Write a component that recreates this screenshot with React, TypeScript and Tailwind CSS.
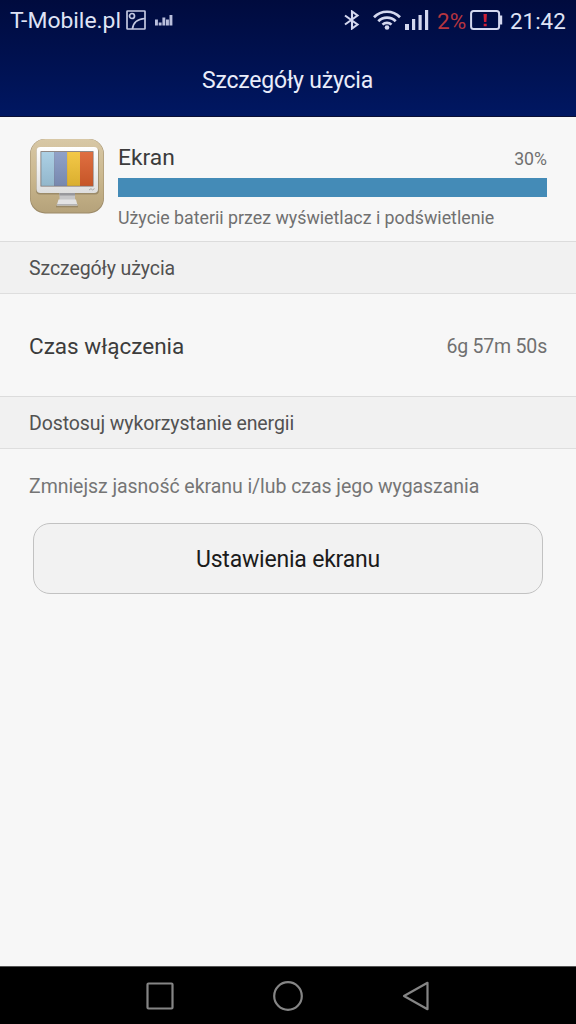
import type { ReactNode } from 'react';

const BARWY = ['#a3cbe2', '#8497c2', '#f2c234', '#dc5f2c'];

function SectionHeader({ children }: { children: ReactNode }) {
  return (
    <div className="h-[52px] shrink-0 border-t border-[#dcdcdc] bg-[#f1f1f1] pl-[29px] pt-[3px] flex items-center">
      <h2 className="text-[19.5px] leading-6 tracking-[-0.1px] text-[#525252]">{children}</h2>
    </div>
  );
}

function StatusBar() {
  return (
    <div className="flex h-10 items-center pl-[10px] pr-[9px] text-[22px] leading-10 text-[#dfe3f5]">
      <span className="w-[112px] pt-[2px] text-[22.9px] whitespace-nowrap">T-Mobile.pl</span>
      <svg className="ml-1 shrink-0" width="20" height="20" viewBox="0 0 20 20" fill="none" stroke="#c3c8e0" strokeWidth="1.7">
        <rect x="1" y="1" width="18" height="18" rx="0.5" />
        <circle cx="6" cy="6" r="2.5" />
        <path d="M6.500 19c.5-6 5-10 12.500-10.500" />
      </svg>
      <svg className="ml-[9px] shrink-0" width="18" height="12" viewBox="0 0 18 12" fill="#b9bfdc">
        <path d="M0 5.500h2.900v6H0zM3.700 8.500h2.900v3H3.700zM7.400 3.500h2.900v8H7.400zM11 5.500h2.900v6H11zM14.500 1h2.900v10.500h-2.900z" />
      </svg>
      <div className="ml-auto flex shrink-0 items-center">
        <svg width="16" height="20" viewBox="0 0 16 20" fill="none" stroke="#d4d8ef" strokeWidth="2.100">
          <path d="M1 5.500l12.500 9L8 18.500v-17l5.500 4-12.500 9" />
        </svg>
        <svg className="ml-[13px]" width="28" height="20" viewBox="0 0 28 20" fill="none" stroke="#d4d8ef" strokeWidth="2.700">
          <path d="M1 7.300a18 18 0 0 1 26 0M5.300 11.200a12.200 12.200 0 0 1 17.400 0M9.500 14.600a6.500 6.500 0 0 1 9 0" />
          <circle cx="14" cy="17.500" r="2.300" fill="#d4d8ef" stroke="none" />
        </svg>
        <svg className="ml-1" width="24" height="20" viewBox="0 0 24 20" fill="#d4d8ef">
          <path d="M0 14h4v6H0zM7 9h3.200v11H7zM13.500 5h3.200v15h-3.200zM20 0h3.200v20H20z" />
        </svg>
        <span className="ml-[8px] w-[30px] pt-[2px] text-[22.5px] whitespace-nowrap text-[#b5353f]">2%</span>
        <svg className="ml-[3px]" width="33" height="20" viewBox="0 0 33 20" fill="none">
          <rect x="1.100" y="1.100" width="28" height="17.800" rx="2.500" stroke="#d4d8ef" strokeWidth="2" />
          <path d="M30 5.500h2.200v9H30z" fill="#d4d8ef" />
          <path d="M13.500 4h3.400l-.5 8h-2.400zM13.700 13.700h3v2.500h-3z" fill="#cf1f35" />
        </svg>
        <span className="ml-[7px] w-[57px] pt-[2px] text-[22.4px] whitespace-nowrap">21:42</span>
      </div>
    </div>
  );
}

function ScreenIcon() {
  return (
    <svg className="shrink-0" width="76" height="76" viewBox="0 0 76 76">
      <defs>
        <linearGradient id="sand" x1="0" y1="0" x2="0" y2="1">
          <stop offset="0" stopColor="#d8c8a6" />
          <stop offset="0.5" stopColor="#cbb88f" />
          <stop offset="1" stopColor="#b5a27a" />
        </linearGradient>
        <linearGradient id="shell" x1="0" y1="0" x2="0" y2="1">
          <stop offset="0" stopColor="#ffffff" />
          <stop offset="1" stopColor="#dedede" />
        </linearGradient>
        <linearGradient id="shade" x1="0" y1="0" x2="0" y2="1">
          <stop offset="0" stopColor="#fff" stopOpacity="0.1" />
          <stop offset="1" stopColor="#000" stopOpacity="0.1" />
        </linearGradient>
      </defs>
      <rect x="1" y="1" width="74" height="74.500" rx="15" fill="#9c8a68" />
      <rect x="1.500" y="1" width="73" height="73.500" rx="15" fill="url(#sand)" />
      <rect x="7" y="10" width="63" height="46.500" rx="4" fill="#77694e" opacity="0.5" />
      <rect x="7.500" y="9" width="61.500" height="46" rx="4" fill="url(#shell)" />
      <rect x="11.500" y="13.200" width="53" height="35.300" fill="#766b68" />
      {BARWY.map((kolor, i) => (
        <rect key={kolor} x={12.3 + i * 12.9} y="14" width="12.900" height="33.800" fill={kolor} />
      ))}
      <rect x="12.300" y="14" width="51.600" height="33.800" fill="url(#shade)" />
      <path d="M60 52l2-1.300 1.500 1.200 2-1.200" fill="none" stroke="#aaa" strokeWidth="1" />
      <path d="M27 67.500h22v1.800H27z" fill="#77694e" opacity="0.5" />
      <path d="M30.500 55h15.500v7H30.500z" fill="#c6c6c8" />
      <path d="M30.500 55h15.500v2.500H30.500z" fill="#98989c" />
      <path d="M29.500 61.500h17.500l1.500 6H27.700z" fill="#e3e3e4" />
      <path d="M27.700 66h20.800v1.500H27.700z" fill="#b4b4b6" />
    </svg>
  );
}

function NavBar() {
  return (
    <nav className="flex h-[58px] shrink-0 items-center justify-center gap-[98px] border-t border-[#555] bg-black">
      <svg width="30" height="30" viewBox="0 0 30 30" fill="none" stroke="#858585" strokeWidth="2.200">
        <rect x="2.500" y="2.500" width="25" height="25" rx="1" />
      </svg>
      <svg width="30" height="30" viewBox="0 0 30 30" fill="none" stroke="#858585" strokeWidth="2.200">
        <circle cx="15" cy="15" r="13.800" />
      </svg>
      <svg width="30" height="30" viewBox="0 0 30 30" fill="none" stroke="#858585" strokeWidth="2.200" strokeLinejoin="round">
        <path d="M26.500 1.800v26.400L3 15z" />
      </svg>
    </nav>
  );
}

export default function App() {
  return (
    <div className="flex h-screen w-full flex-col bg-[#f7f7f7] font-[Roboto,sans-serif]">
      <header className="h-[117px] shrink-0 border-b border-[#0a0f35] bg-linear-to-b from-[#000b3e] to-[#001762]">
        <StatusBar />
        <h1 className="pt-[25px] pr-px text-center text-[23px] leading-8 tracking-[-0.2px] text-[#e9ecfa]">Szczegóły użycia</h1>
      </header>

      <main className="flex flex-1 flex-col">
        <div className="flex h-[124px] shrink-0 gap-[13px] pl-[29px] pr-[29px] pt-[21px]">
          <ScreenIcon />
          <div className="flex-1">
            <div className="flex h-10 items-center justify-between">
              <span className="text-[22.800px] text-[#3c3c3c]">Ekran</span>
              <span className="pt-[3px] text-[17.700px] text-[#707070]">30%</span>
            </div>
            <div className="h-[19px] bg-[#448bb7]" />
            <p className="pt-[9px] text-[17.800px] leading-6 whitespace-nowrap text-[#707070]">
              Użycie baterii przez wyświetlacz i podświetlenie
            </p>
          </div>
        </div>

        <SectionHeader>Szczegóły użycia</SectionHeader>
        <div className="flex h-[103px] shrink-0 items-center justify-between border-t border-[#dedede] px-[29px] pt-[2px]">
          <span className="pt-px text-[22.500px] text-[#3c3c3c]">Czas włączenia</span>
          <span className="pt-[2px] text-[19.500px] tracking-[-0.200px] text-[#707070]">6g 57m 50s</span>
        </div>

        <SectionHeader>Dostosuj wykorzystanie energii</SectionHeader>
        <div className="border-t border-[#dedede] pt-[26px]">
          <p className="pl-[29px] text-[19.500px] leading-6 tracking-[-0.050px] whitespace-nowrap text-[#757575]">
            Zmniejsz jasność ekranu i/lub czas jego wygaszania
          </p>
          <button className="mx-[33px] mt-[24px] block h-[71px] w-[510px] rounded-[17px] border border-[#c2c2c2] bg-[#f2f2f2] pt-[3px] text-[23px] tracking-[-0.200px] text-[#1b1b1b]">
            Ustawienia ekranu
          </button>
        </div>
      </main>

      <NavBar />
    </div>
  );
}
